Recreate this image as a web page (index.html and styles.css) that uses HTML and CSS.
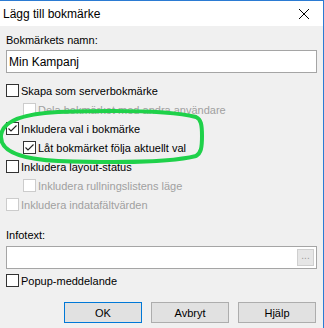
FILE: index.html
```html
<!DOCTYPE html>
<html lang="sv">
<head>
<meta charset="utf-8">
<link rel="stylesheet" href="styles.css">
</head>
<body>
<div class="window">
  <div class="titlebar">
    <span class="title">Lägg till bokmärke</span>
    <svg class="close" width="12" height="12" viewBox="0 0 12 12"><path d="M1 1 L11 11 M11 1 L1 11" stroke="#000" stroke-width="1" fill="none"/></svg>
  </div>
  <div class="content">
    <div class="label first">Bokmärkets namn:</div>
    <div class="input name">Min Kampanj</div>
    <div class="checks">
      <div class="row"><span class="box"></span><span>Skapa som serverbokmärke</span></div>
      <div class="row indent disabled"><span class="box"></span><span>Dela bokmärket med andra användare</span></div>
      <div class="row"><span class="box"><svg width="11" height="11" viewBox="0 0 11 11"><path d="M1.5 5.5 L4 8 L9.5 2.5" stroke="#222" stroke-width="1.1" fill="none"/></svg></span><span>Inkludera val i bokmärke</span></div>
      <div class="row indent"><span class="box"><svg width="11" height="11" viewBox="0 0 11 11"><path d="M1.5 5.5 L4 8 L9.5 2.5" stroke="#222" stroke-width="1.1" fill="none"/></svg></span><span>Låt bokmärket följa aktuellt val</span></div>
      <div class="row"><span class="box"></span><span>Inkludera layout-status</span></div>
      <div class="row indent disabled"><span class="box"></span><span>Inkludera rullningslistens läge</span></div>
      <div class="row disabled"><span class="box"></span><span>Inkludera indatafältvärden</span></div>
    </div>
    <div class="label info">Infotext:</div>
    <div class="input infotext"><span class="dots">...</span></div>
    <div class="row popup"><span class="box"></span><span>Popup-meddelande</span></div>
    <div class="buttons">
      <div class="btn default">OK</div>
      <div class="btn">Avbryt</div>
      <div class="btn">Hjälp</div>
    </div>
  </div>
  <svg class="highlight" width="210" height="56" viewBox="0 0 210 56">
    <path d="M60 4 C120 2 175 3 198 9 C203 11 204 17 204 28 C204 40 203 45 198 48 C175 54 120 55 60 53 C20 51 3 42 3 29 C3 15 20 6 60 4 Z" stroke="#1fd14a" stroke-width="4" fill="none"/>
  </svg>
</div>
</body>
</html>
```
FILE: styles.css
```css
* { box-sizing: border-box; }
html, body { margin: 0; padding: 0; }
body {
  width: 324px;
  height: 328px;
  overflow: hidden;
  font-family: "Liberation Sans", Arial, sans-serif;
  font-size: 11px;
  color: #000;
  background: #f0f0f0;
}
.window {
  position: relative;
  width: 324px;
  height: 328px;
  border-right: 1px solid #2b7bd3;
  background: #f0f0f0;
}
.titlebar {
  height: 26px;
  background: #fff;
  border-top: 1px solid #2b7bd3;
  display: flex;
  align-items: center;
  justify-content: space-between;
  padding: 0 13px 0 3px;
}
.title { font-size: 12px; margin-top: 1px; }
.close { display: block; }
.content {
  padding: 0 6px 0 6px;
  display: flex;
  flex-direction: column;
}
.label { height: 16px; line-height: 16px; color: #000; }
.label.first { margin-top: 6px; }
.input {
  height: 23px;
  background: #fff;
  border: 1px solid #a5a5a5;
  display: flex;
  align-items: center;
  padding-left: 2px;
}
.input.name { margin-top: 2px; width: 311px; font-size: 12px; }
.checks { margin-top: 8px; display: flex; flex-direction: column; }
.row {
  height: 19px;
  display: flex;
  align-items: center;
  gap: 2px;
}
.row.indent { padding-left: 17px; }
.box {
  width: 13px;
  height: 13px;
  background: #fff;
  border: 1px solid #333;
  display: flex;
  align-items: center;
  justify-content: center;
  flex: none;
}
.box svg { display: block; }
.disabled { color: #a0a0a0; }
.disabled .box { border-color: #cccccc; }
.label.info { margin-top: 13px; }
.input.infotext {
  margin-top: 3px;
  width: 311px;
  justify-content: flex-end;
  padding-right: 2px;
}
.dots {
  width: 17px;
  height: 17px;
  background: #e6e6e6;
  border: 1px solid #cfcfcf;
  color: #9a9a9a;
  font-size: 10px;
  line-height: 12px;
  text-align: center;
}
.row.popup { margin-top: 2px; }
.buttons {
  margin-top: 12px;
  display: flex;
  justify-content: flex-end;
  gap: 9px;
  padding-right: 1px;
}
.btn {
  width: 78px;
  height: 21px;
  background: #e1e1e1;
  border: 1px solid #adadad;
  display: flex;
  align-items: center;
  justify-content: center;
}
.btn.default { border: 1px solid #0078d7; }
.highlight {
  position: absolute;
  left: -2px;
  top: 108px;
}
```
